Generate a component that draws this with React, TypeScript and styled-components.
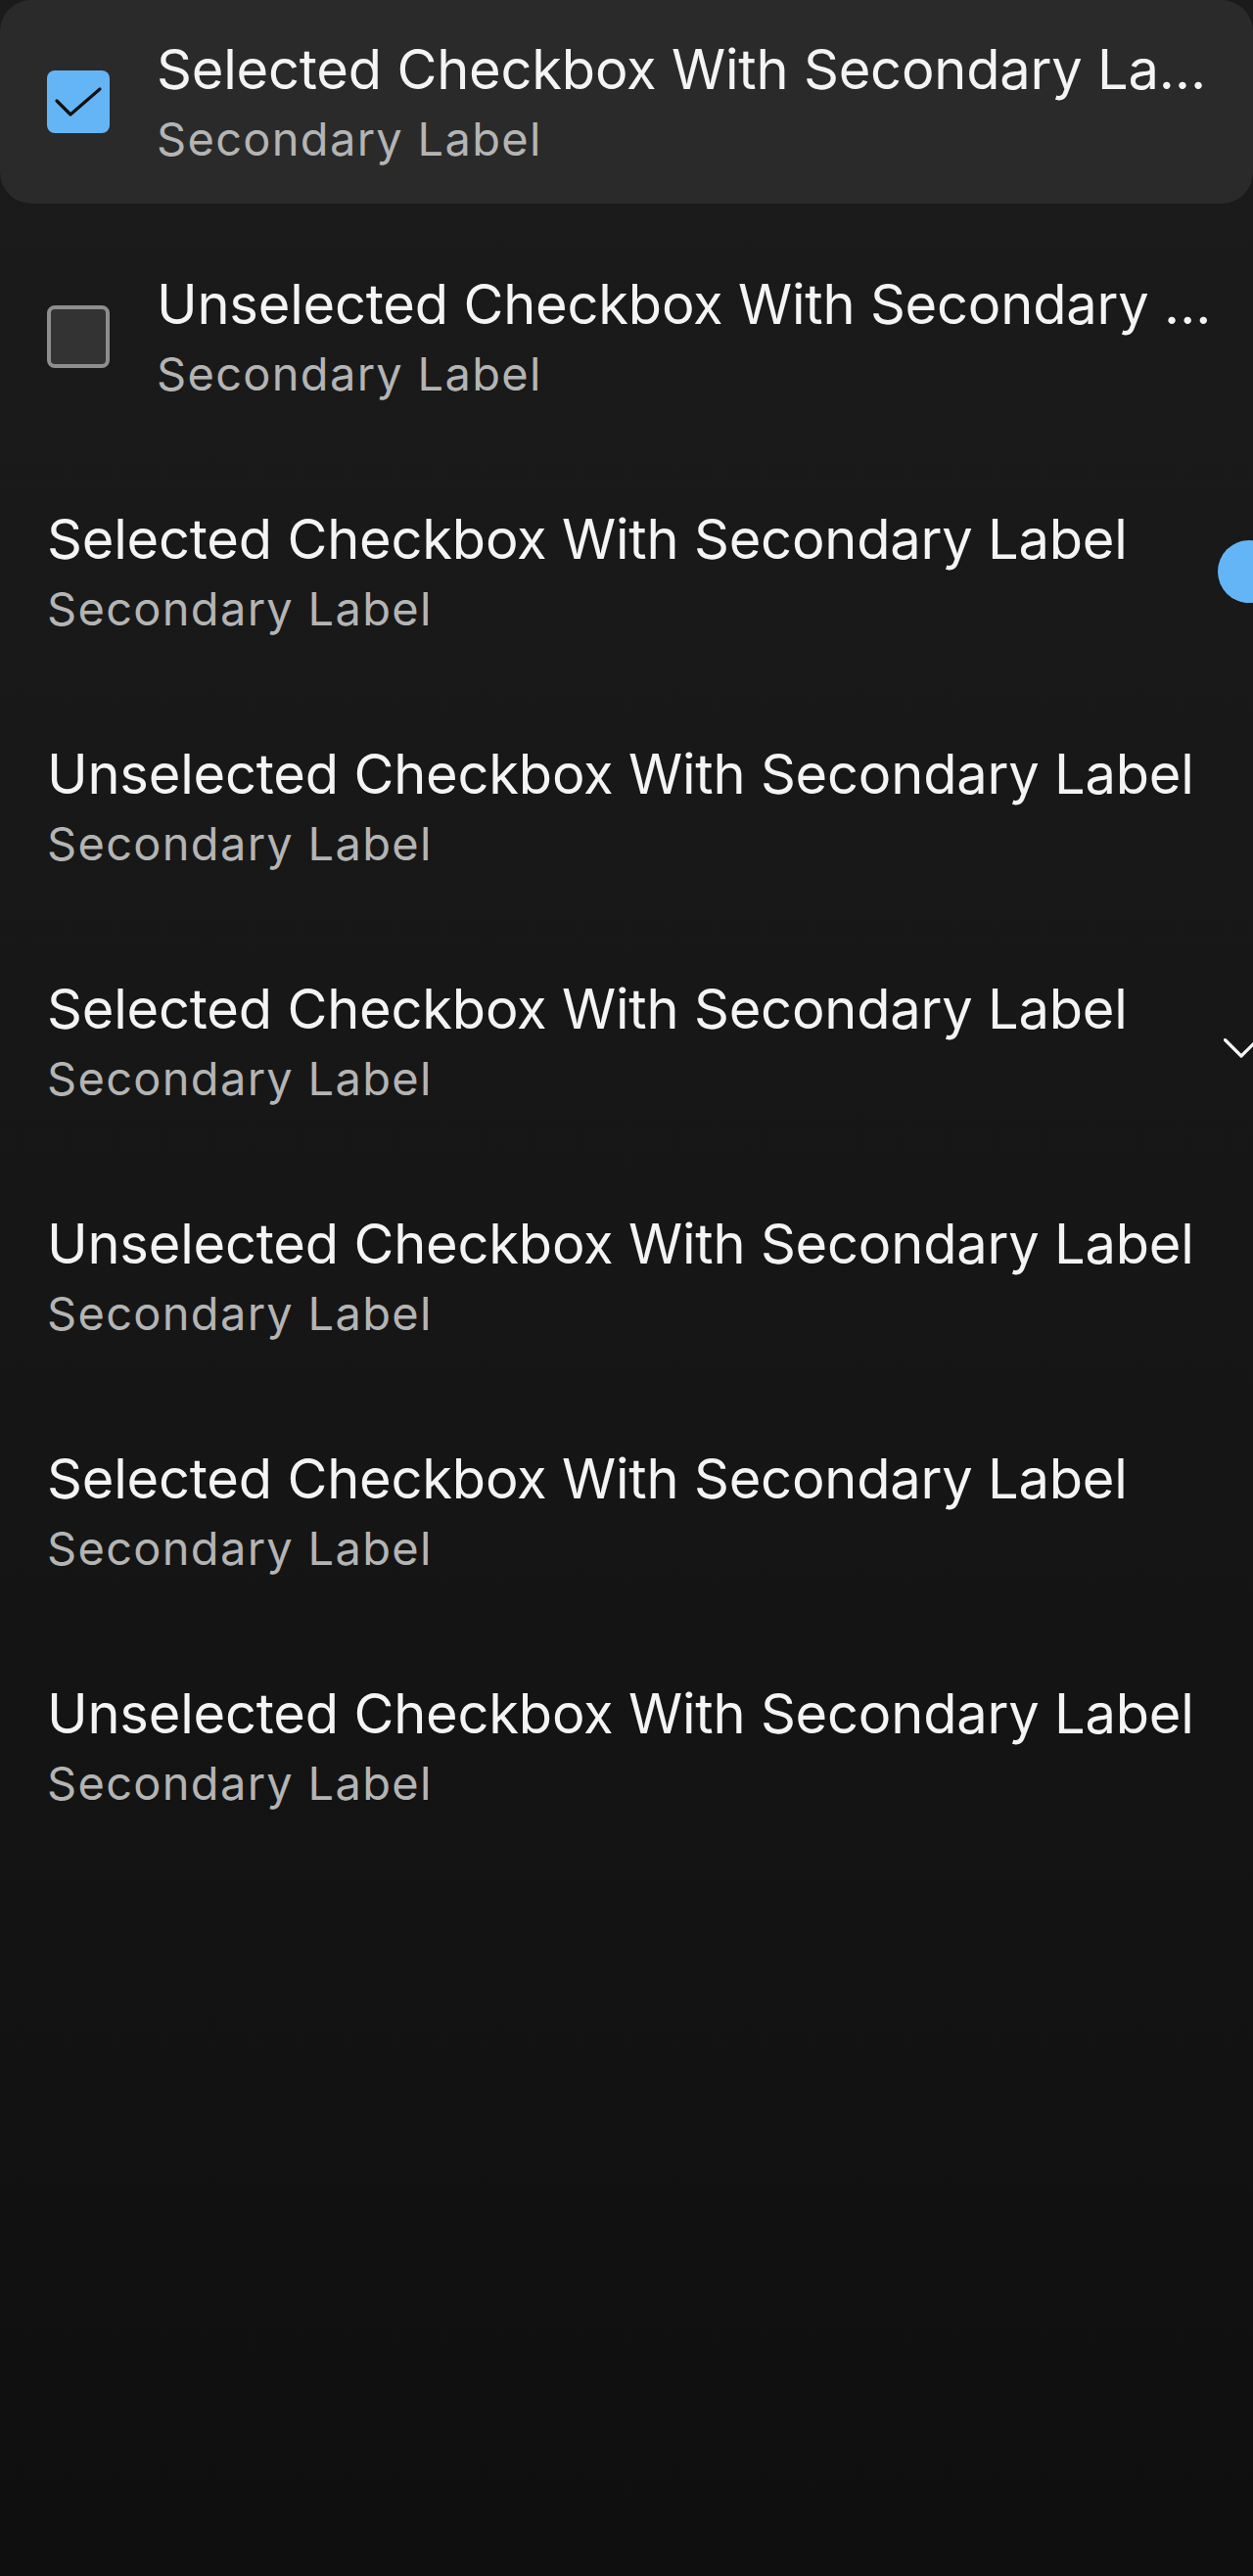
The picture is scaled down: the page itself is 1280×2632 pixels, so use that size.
import React from 'react'
import styled, { createGlobalStyle } from 'styled-components'

const GlobalStyle = createGlobalStyle`
  html, body {
    margin: 0;
    padding: 0;
  }
  body {
    background: linear-gradient(180deg, #1b1b1b 0%, #151515 60%, #0f0f0f 100%);
    min-height: 2632px;
    font-family: Inter, 'Noto Sans', sans-serif;
  }
`

const Page = styled.main`
  display: flex;
  flex-direction: column;
  gap: 32px;
  width: 1280px;
  min-height: 2632px;
  overflow: hidden;
`

const Row = styled.div<{ $active?: boolean }>`
  display: flex;
  align-items: center;
  height: 208px;
  padding-left: 48px;
  border-radius: 32px;
  overflow: hidden;
  background: ${(p) => (p.$active ? '#2a2a2a' : 'transparent')};
`

const Box = styled.div<{ $checked?: boolean }>`
  flex: none;
  box-sizing: border-box;
  width: 64px;
  height: 64px;
  margin-right: 48px;
  border-radius: 8px;
  display: flex;
  align-items: center;
  justify-content: center;
  background: ${(p) => (p.$checked ? '#64b5f6' : '#333333')};
  border: ${(p) => (p.$checked ? 'none' : '4px solid #8e8e8e')};
`

const Text = styled.div`
  flex: 1;
  min-width: 0;
  display: flex;
  flex-direction: column;
`

const Title = styled.div`
  font-size: 56px;
  line-height: 76px;
  letter-spacing: -0.2px;
  color: #f4f4f4;
  white-space: nowrap;
  overflow: hidden;
  text-overflow: ellipsis;
`

const Sub = styled.div`
  font-size: 47px;
  line-height: 66px;
  letter-spacing: 1.3px;
  color: #b4b4b4;
  white-space: nowrap;
  overflow: hidden;
  text-overflow: ellipsis;
`

const Trailing = styled.div`
  flex: none;
  width: 36px;
  display: flex;
  align-items: center;
`

const Dot = styled.div`
  flex: none;
  width: 64px;
  height: 64px;
  border-radius: 50%;
  background: #64b5f6;
`

const Chevron = styled.svg`
  flex: none;
  margin: 14px 0 0 6px;
`

type Lead = 'checked' | 'unchecked' | null
type Trail = 'dot' | 'chevron' | null

interface Item {
  selected: boolean
  lead: Lead
  trail: Trail
  active?: boolean
}

const items: Item[] = [
  { selected: true, lead: 'checked', trail: null, active: true },
  { selected: false, lead: 'unchecked', trail: null },
  { selected: true, lead: null, trail: 'dot' },
  { selected: false, lead: null, trail: null },
  { selected: true, lead: null, trail: 'chevron' },
  { selected: false, lead: null, trail: null },
  { selected: true, lead: null, trail: null },
  { selected: false, lead: null, trail: null },
]

const CheckMark = () => (
  <svg width="64" height="64" viewBox="0 0 64 64">
    <polyline
      points="10,31 24,45 54,19"
      fill="none"
      stroke="#111"
      strokeWidth="3.2"
      strokeLinecap="round"
      strokeLinejoin="round"
    />
  </svg>
)

export default function App() {
  return (
    <>
      <GlobalStyle />
      <Page>
        {items.map((item, i) => (
          <Row key={i} $active={item.active}>
            {item.lead && (
              <Box $checked={item.lead === 'checked'}>
                {item.lead === 'checked' && <CheckMark />}
              </Box>
            )}
            <Text>
              <Title>
                {item.selected ? 'Selected' : 'Unselected'} Checkbox With Secondary Label
              </Title>
              <Sub>Secondary Label</Sub>
            </Text>
            <Trailing>
              {item.trail === 'dot' && <Dot />}
              {item.trail === 'chevron' && (
                <Chevron width="36" height="20" viewBox="0 0 36 20">
                  <polyline
                    points="1.5,1.5 18,18 34.5,1.5"
                    fill="none"
                    stroke="#f4f4f4"
                    strokeWidth="3.2"
                    strokeLinecap="round"
                    strokeLinejoin="round"
                  />
                </Chevron>
              )}
            </Trailing>
          </Row>
        ))}
      </Page>
    </>
  )
}
